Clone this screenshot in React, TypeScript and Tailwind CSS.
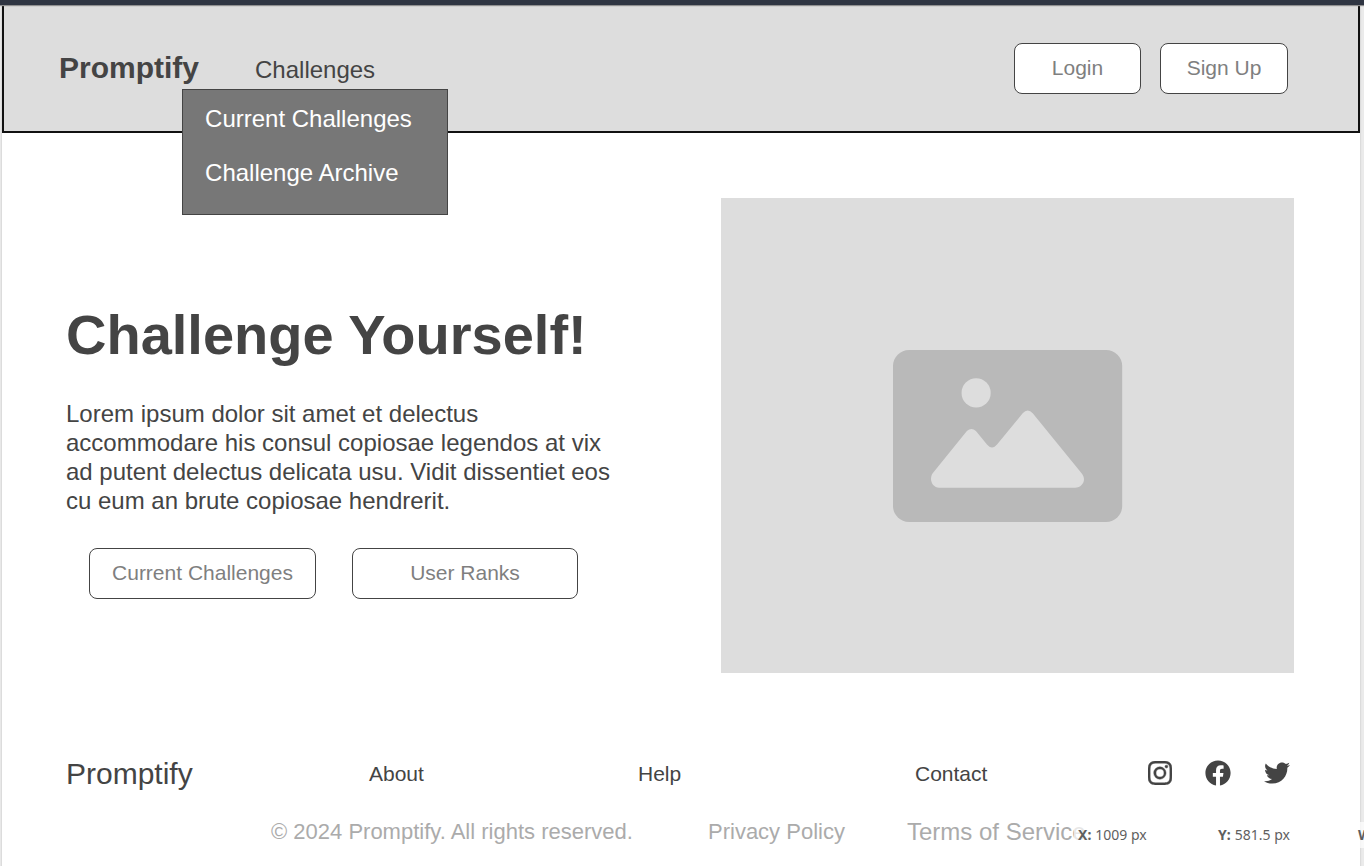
import type { ReactNode } from "react";
import { BsInstagram } from "react-icons/bs";
import { FaFacebook, FaTwitter } from "react-icons/fa";

function OutlineButton({ children, className }: { children: ReactNode; className: string }) {
  return (
    <button
      type="button"
      className={`h-[51px] shrink-0 whitespace-nowrap rounded-lg border border-[#444] bg-white pb-0.5 text-[21px] leading-6 text-[#7f7f7f] ${className}`}
    >
      {children}
    </button>
  );
}

function Header() {
  return (
    <header className="flex h-32 items-start justify-between border-x-2 border-b-2 border-[#111] bg-[#ddd] pl-[55px] pr-[70px]">
      <div className="flex pt-[46px]">
        <a href="#" className="text-3xl font-bold leading-[34px]">
          Promptify
        </a>
        <nav className="relative ml-14">
          <button type="button" aria-expanded="true" className="block h-[38px] text-2xl leading-[38px]">
            Challenges
          </button>
          <ul className="absolute left-1/2 top-[38px] z-10 h-[126px] w-[266px] -translate-x-1/2 space-y-[26px] border border-[#444] bg-[#777] px-[22px] pt-[15px] text-2xl leading-7 text-white">
            <li>
              <a href="#current">Current Challenges</a>
            </li>
            <li>
              <a href="#archive">Challenge Archive</a>
            </li>
          </ul>
        </nav>
      </div>
      <div className="flex gap-[19px] pt-[38px]">
        <OutlineButton className="w-[127px]">Login</OutlineButton>
        <OutlineButton className="w-[128px]">Sign Up</OutlineButton>
      </div>
    </header>
  );
}

function PicturePlaceholder() {
  return (
    <div className="flex aspect-[573/475] items-center justify-center bg-[#ddd]">
      <svg viewBox="0 0 228 171" className="w-2/5 overflow-visible" role="img" aria-label="Picture">
        <rect width="228" height="171" rx="16" fill="#b9b9b9" />
        <circle cx="82.7" cy="42.7" r="14.5" fill="#ddd" />
        <path
          d="M46 137 H181 C189 137 192.500 129 188 123 L139 63 Q134 57.500 129 63 L103.500 94 Q98.500 100 93.500 94 L82.500 80.500 Q78 76.500 73.500 80.500 L39.500 122.500 C35.500 128.500 39 137 46 137 Z"
          fill="#ddd"
        />
      </svg>
    </div>
  );
}

function Hero() {
  return (
    <section className="grid grid-cols-[655fr_573fr] items-start pl-16 pr-[66px] pt-[65px]">
      <div className="pt-[105px]">
        <h1 className="whitespace-nowrap text-[56px] font-bold leading-[64px]">Challenge Yourself!</h1>
        <p className="mt-8 max-w-[572px] text-2xl leading-[29px]">
          Lorem ipsum dolor sit amet et delectus
          <br />
          accommodare his consul copiosae legendos at vix
          <br />
          ad putent delectus delicata usu. Vidit dissentiet eos
          <br />
          cu eum an brute copiosae hendrerit.
        </p>
        <div className="mt-[33px] flex gap-9 pl-[23px]">
          <OutlineButton className="w-[227px]">Current Challenges</OutlineButton>
          <OutlineButton className="w-[226px]">User Ranks</OutlineButton>
        </div>
      </div>
      <PicturePlaceholder />
    </section>
  );
}

function Footer() {
  return (
    <footer className="pl-16 pr-[66px] pt-[84px]">
      <div className="grid grid-cols-[303fr_269fr_277fr_233fr_146fr] items-center text-[21px] leading-[34px]">
        <a href="#" className="text-3xl leading-[34px]">
          Promptify
        </a>
        <a href="#about">About</a>
        <a href="#help">Help</a>
        <a href="#contact">Contact</a>
        <div className="flex items-center gap-[33px] pb-0.5">
          <a href="#instagram" aria-label="Instagram">
            <BsInstagram className="size-6 stroke-current [stroke-width:0.3]" />
          </a>
          <a href="#facebook" aria-label="Facebook">
            <FaFacebook className="size-[26px]" />
          </a>
          <a href="#twitter" aria-label="Twitter">
            <FaTwitter className="size-[26px]" />
          </a>
        </div>
      </div>
      <div className="mt-6 grid grid-cols-[205fr_437fr_199fr_387fr] items-center whitespace-nowrap text-[22px] leading-[34px] text-[#ababab]">
        <p className="col-start-2">© 2024 Promptify. All rights reserved.</p>
        <a href="#privacy">Privacy Policy</a>
        <a href="#terms" className="text-2xl leading-[34px]">
          Terms of Service
        </a>
      </div>
    </footer>
  );
}

function PositionReadout() {
  return (
    <dl className="absolute bottom-[18px] right-0 flex w-[290px] overflow-hidden whitespace-nowrap bg-white/70 pl-1 font-['Noto_Sans',sans-serif] text-sm leading-[26px] text-[#5f5f5f]">
      <div className="flex w-[140px] shrink-0 gap-1">
        <dt className="font-bold">X:</dt>
        <dd>1009 px</dd>
      </div>
      <div className="flex w-[140px] shrink-0 gap-1">
        <dt className="font-bold">Y:</dt>
        <dd>581.5 px</dd>
      </div>
      <div className="flex shrink-0 gap-1">
        <dt className="font-bold">W</dt>
      </div>
    </dl>
  );
}

export default function App() {
  return (
    <div className="relative min-h-screen overflow-hidden bg-[#ebebeb] pl-0.5 pr-1 font-['Liberation_Sans',Arial,sans-serif] text-[#444]">
      <div className="relative z-10 -ml-0.5 -mr-1 h-[5px] bg-[#2f3542] shadow-[0_1px_1px_#8f8f8f]" />
      <div className="min-h-[calc(100vh-5px)] bg-white shadow-[0_0_1px_1px_#dcdcdc]">
        <Header />
        <main>
          <Hero />
        </main>
        <Footer />
      </div>
      <PositionReadout />
    </div>
  );
}
